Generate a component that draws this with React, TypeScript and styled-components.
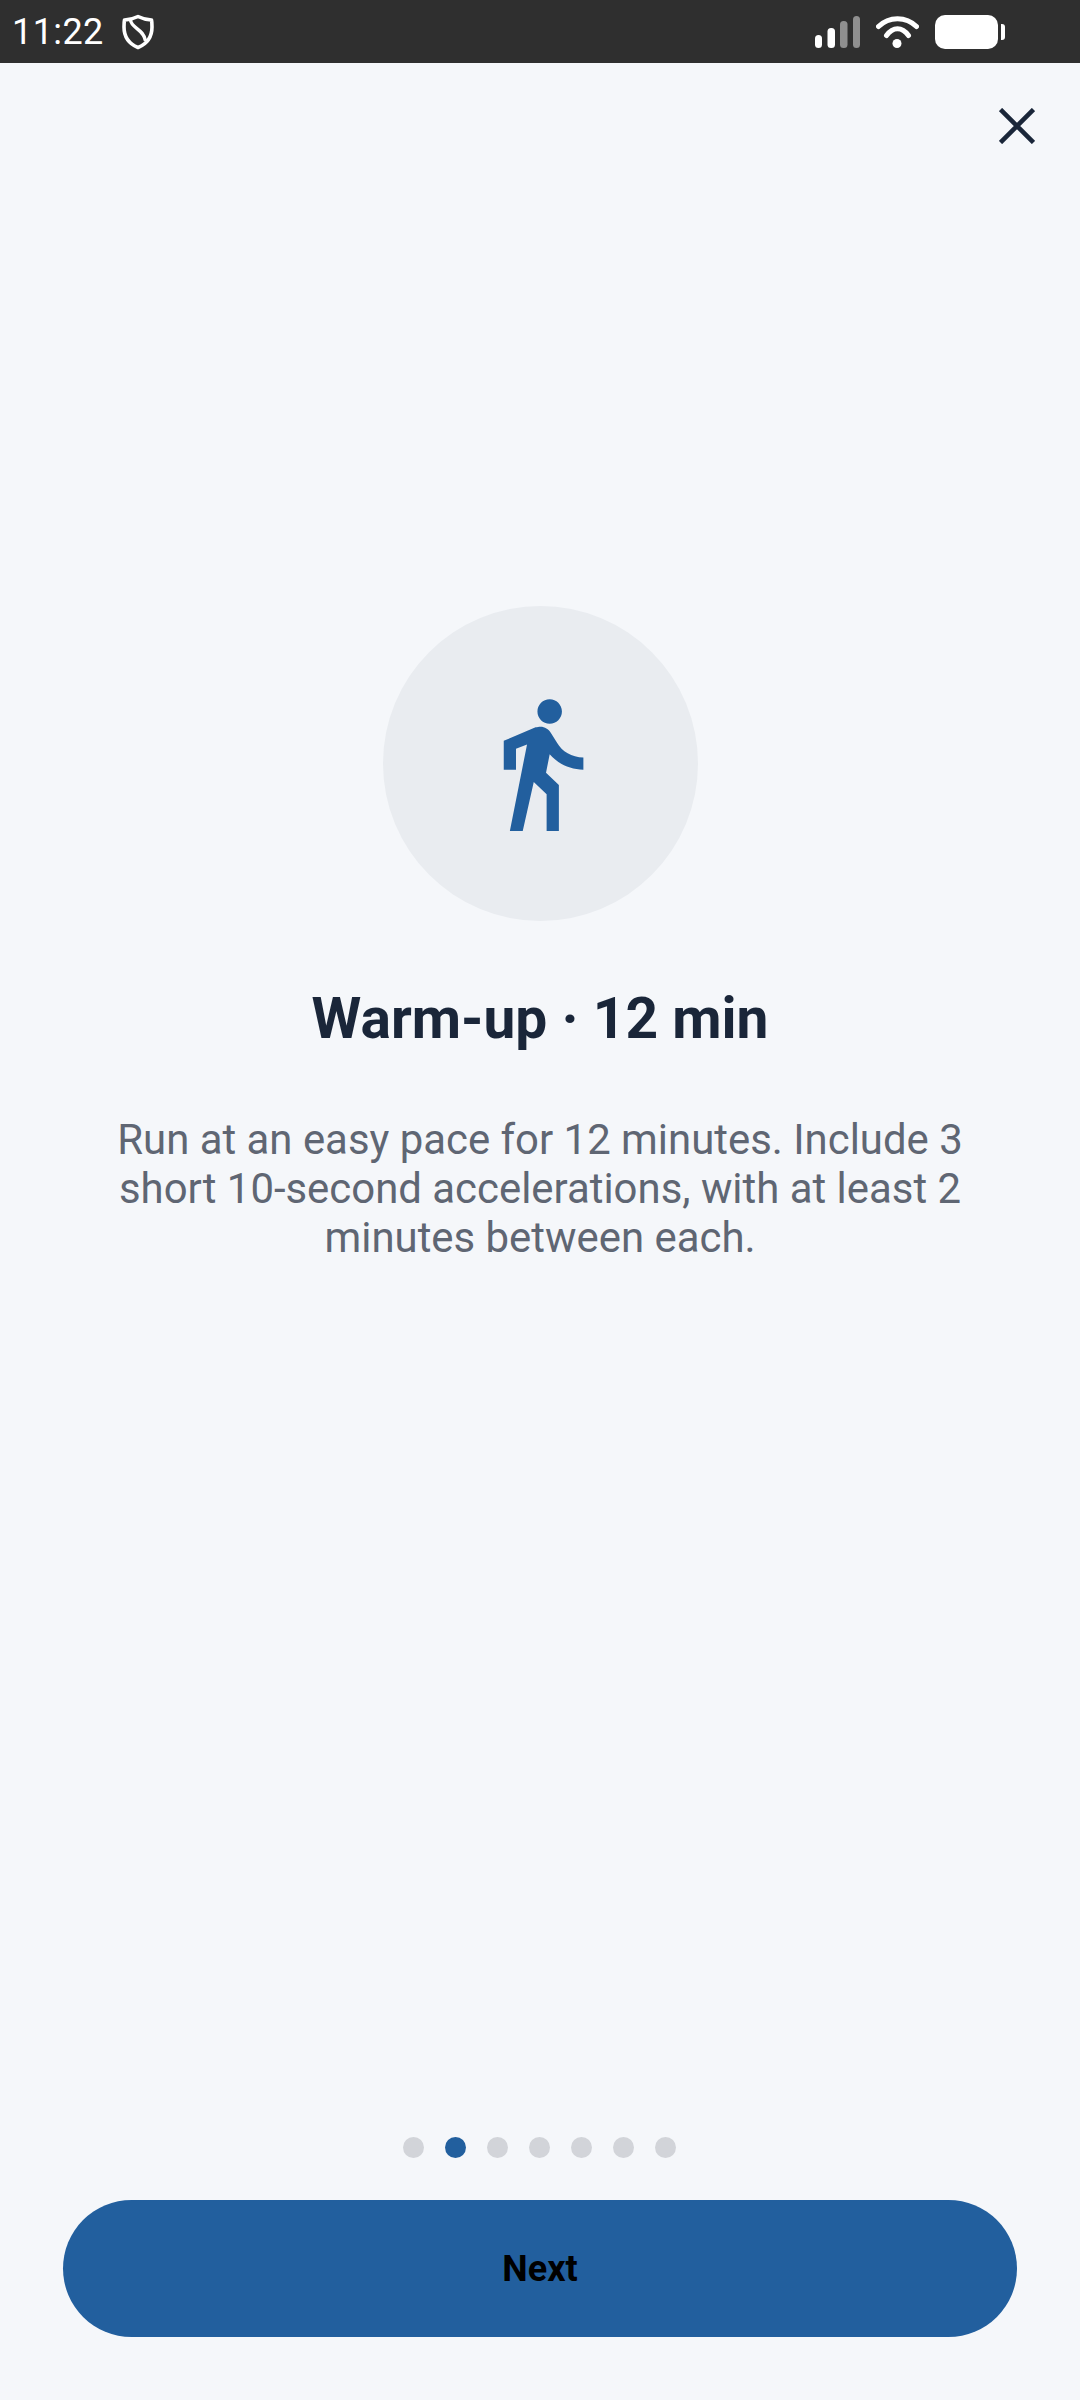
import styled, { createGlobalStyle } from 'styled-components';

const GlobalStyle = createGlobalStyle`
  html, body {
    margin: 0;
    padding: 0;
    background: #f5f7fa;
  }
  * {
    box-sizing: border-box;
  }
`;

const Screen = styled.div`
  width: 1080px;
  height: 2400px;
  display: flex;
  flex-direction: column;
  background: #f5f7fa;
  font-family: Roboto, "Liberation Sans", sans-serif;
  overflow: hidden;
`;

const StatusBar = styled.div`
  height: 63px;
  flex: none;
  display: flex;
  align-items: center;
  justify-content: space-between;
  padding: 0 75px 0 12px;
  background: #2f2f2f;
  color: #fff;
`;

const StatusGroup = styled.div`
  display: flex;
  align-items: center;
  gap: ${(props: { $gap: number }) => props.$gap}px;
`;

const Clock = styled.span`
  font-size: 36px;
  letter-spacing: 0.4px;
  line-height: 40px;
`;

const TopRow = styled.div`
  flex: none;
  display: flex;
  justify-content: flex-end;
  padding: 45px 45px 0 0;
`;

const CloseButton = styled.div`
  width: 36px;
  height: 36px;
  display: flex;
  cursor: pointer;
`;

const Main = styled.div`
  flex: 1;
  display: flex;
  flex-direction: column;
  align-items: center;
  padding-top: 462px;
`;

const IconCircle = styled.div`
  width: 315px;
  height: 315px;
  display: flex;
  align-items: center;
  justify-content: center;
  border-radius: 50%;
  background: #e9ecf0;
`;

const Title = styled.h1`
  margin: 63px 0 0;
  font-size: 56.9px;
  line-height: 70px;
  font-weight: 700;
  color: #1a2639;
  text-align: center;
`;

const Description = styled.p`
  width: 880px;
  margin: 61px 0 0;
  font-size: 41.9px;
  line-height: 49px;
  font-weight: 400;
  color: #5f6673;
  text-align: center;
`;

const Footer = styled.div`
  flex: none;
  display: flex;
  flex-direction: column;
  align-items: center;
  gap: 42px;
  padding: 0 63px 63px;
`;

const Dots = styled.div`
  display: flex;
  gap: 21px;
  margin-right: 1px;
`;

const Dot = styled.span<{ $active?: boolean }>`
  width: 21px;
  height: 21px;
  border-radius: 50%;
  background: ${(props) => (props.$active ? '#225f9e' : '#d2d4d9')};
`;

const NextButton = styled.button`
  width: 100%;
  height: 137px;
  border: none;
  border-radius: 69px;
  background: #225f9e;
  color: #000;
  font-family: inherit;
  font-size: 36px;
  font-weight: 700;
  cursor: pointer;
`;

const App = () => (
  <Screen>
    <GlobalStyle />
    <StatusBar>
      <StatusGroup $gap={18}>
        <Clock>11:22</Clock>
        <svg width="32" height="36" viewBox="0 0 32 36" fill="none">
          <path
            d="M16 2.5 C20 4.5 24.5 5.8 29.5 6 C30 8 30 10 30 13 C30 23 24.5 30 16 33.5 C7.5 30 2 23 2 13 C2 10 2 8 2.5 6 C7.5 5.8 12 4.5 16 2.5 Z"
            stroke="#fff"
            strokeWidth="3.6"
            strokeLinejoin="round"
          />
          <path d="M8.5 6 C9 14 22 15 23.5 27" stroke="#fff" strokeWidth="3.4" />
        </svg>
      </StatusGroup>
      <StatusGroup $gap={16}>
        <svg width="45" height="32" viewBox="0 0 45 32">
          <rect x="0" y="19" width="7" height="13" rx="3.5" fill="#fff" />
          <rect x="12.5" y="12" width="7.5" height="20" rx="3.5" fill="#fff" />
          <rect x="25" y="5" width="7.5" height="27" rx="3.5" fill="#8f8f8f" />
          <rect x="38" y="0" width="7" height="32" rx="3.5" fill="#8f8f8f" />
        </svg>
        <svg width="43" height="32" viewBox="0 0 43 32" fill="none">
          <path d="M2.5 10.5 C13 0 30 0 40.5 10.5" stroke="#fff" strokeWidth="5" strokeLinecap="round" />
          <path d="M10.5 19.5 C17 10.5 26 10.5 32.5 19.5" stroke="#fff" strokeWidth="5" strokeLinecap="round" />
          <circle cx="21" cy="27.5" r="4.5" fill="#fff" />
        </svg>
        <svg width="70" height="34" viewBox="0 0 70 34">
          <rect x="0" y="0" width="63" height="34" rx="10" fill="#fff" />
          <path d="M66 9 h1 a3 3 0 0 1 3 3 v10 a3 3 0 0 1 -3 3 h-1 Z" fill="#fff" />
        </svg>
      </StatusGroup>
    </StatusBar>
    <TopRow>
      <CloseButton>
        <svg width="36" height="36" viewBox="0 0 36 36" fill="none">
          <path d="M1.5 1.5 L34.5 34.5 M34.5 1.5 L1.5 34.5" stroke="#1a2639" strokeWidth="4.6" />
        </svg>
      </CloseButton>
    </TopRow>
    <Main>
      <IconCircle>
        <svg width="147" height="147" viewBox="0 0 24 24" fill="#225f9e">
          <path d="M13.5 5.5c1.1 0 2-.9 2-2s-.9-2-2-2-2 .9-2 2 .9 2 2 2zM9.8 8.9L7 23h2.1l1.8-8 2.1 2v6h2v-7.5l-2.1-2 .6-3C14.8 12 16.8 13 19 13v-2c-1.9 0-3.5-1-4.3-2.4l-1-1.6c-.4-.6-1-1-1.7-1-.3 0-.5.1-.8.1L6 8.3V13h2V9.6l1.8-.7" />
        </svg>
      </IconCircle>
      <Title>Warm-up · 12 min</Title>
      <Description>
        Run at an easy pace for 12 minutes. Include 3 short 10-second accelerations, with at least 2 minutes between each.
      </Description>
    </Main>
    <Footer>
      <Dots>
        {[0, 1, 2, 3, 4, 5, 6].map((i) => (
          <Dot key={i} $active={i === 1} />
        ))}
      </Dots>
      <NextButton>Next</NextButton>
    </Footer>
  </Screen>
);

export default App;
